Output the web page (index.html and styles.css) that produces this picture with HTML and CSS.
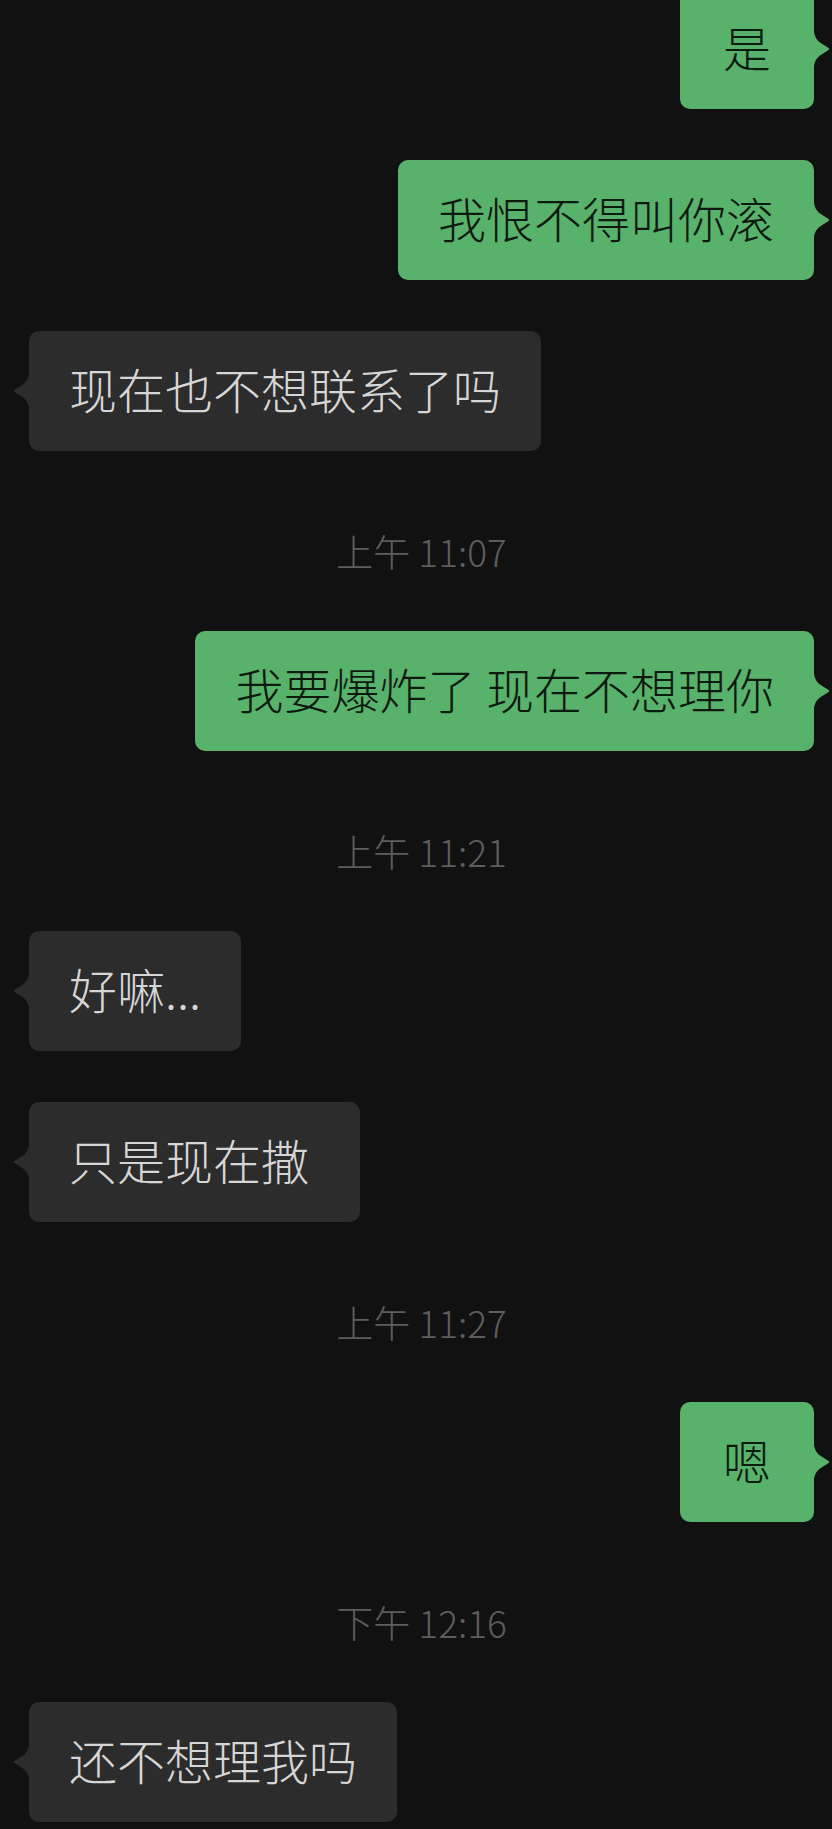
FILE: index.html
```html
<!DOCTYPE html>
<html lang="zh-CN">
<head>
    <meta charset="UTF-8">
    <meta name="viewport" content="width=device-width, initial-scale=1.0">
    <title>聊天记录</title>
    <link rel="stylesheet" href="styles.css">
</head>
<body>
    <div class="chat">
        <div class="bubble out">是</div>
        <div class="bubble out">我恨不得叫你滚</div>
        <div class="bubble in">现在也不想联系了吗</div>

        <div class="time">上午 11:07</div>
        <div class="bubble out">我要爆炸了 现在不想理你</div>

        <div class="time">上午 11:21</div>
        <div class="bubble in">好嘛...</div>
        <div class="bubble in">只是现在撒 </div>

        <div class="time">上午 11:27</div>
        <div class="bubble out">嗯</div>

        <div class="time">下午 12:16</div>
        <div class="bubble in">还不想理我吗</div>
    </div>
</body>
</html>
```

FILE: styles.css
```css
body {
    margin: 0;
    background-color: #111111;
    font-family: "Noto Sans CJK SC", "Noto Sans", sans-serif;
    font-weight: 300;
    overflow: hidden;
}

.chat {
    display: flex;
    flex-direction: column;
    gap: 51px;
    margin-top: -11px; /* scrolled a bit, first bubble is cut off */
    padding: 0 18px 0 29px;
}

.bubble {
    position: relative;
    min-width: 54px;
    padding: 27px 40px 33px;
    font-size: 48px;
    line-height: 60px;
    text-align: center;
    white-space: pre;
    border-radius: 10px;
}

/* little pointer on the side of each bubble */
.bubble::after {
    content: "";
    position: absolute;
    top: 50%;
    width: 17px;
    height: 34px;
    margin-top: -17px;
    background: inherit;
    clip-path: path('M0 0 L1 0 Q2 7 7 10.5 L15.6 16 Q17 17 15.6 18 L7 23.5 Q2 27 1 34 L0 34 Z');
}

.bubble.out {
    align-self: flex-end;
    background-color: #59b26c;
    color: #0d1a0f;
}

.bubble.out::after {
    left: calc(100% - 1px);
}

.bubble.in {
    align-self: flex-start;
    background-color: #2c2c2c;
    color: #d6d6d6;
}

.bubble.in::after {
    right: calc(100% - 1px);
    transform: scaleX(-1);
}

.time {
    padding: 24px 0 4px;
    font-size: 37px;
    line-height: 50px;
    text-align: center;
    color: #5d5d5d;
}
```
